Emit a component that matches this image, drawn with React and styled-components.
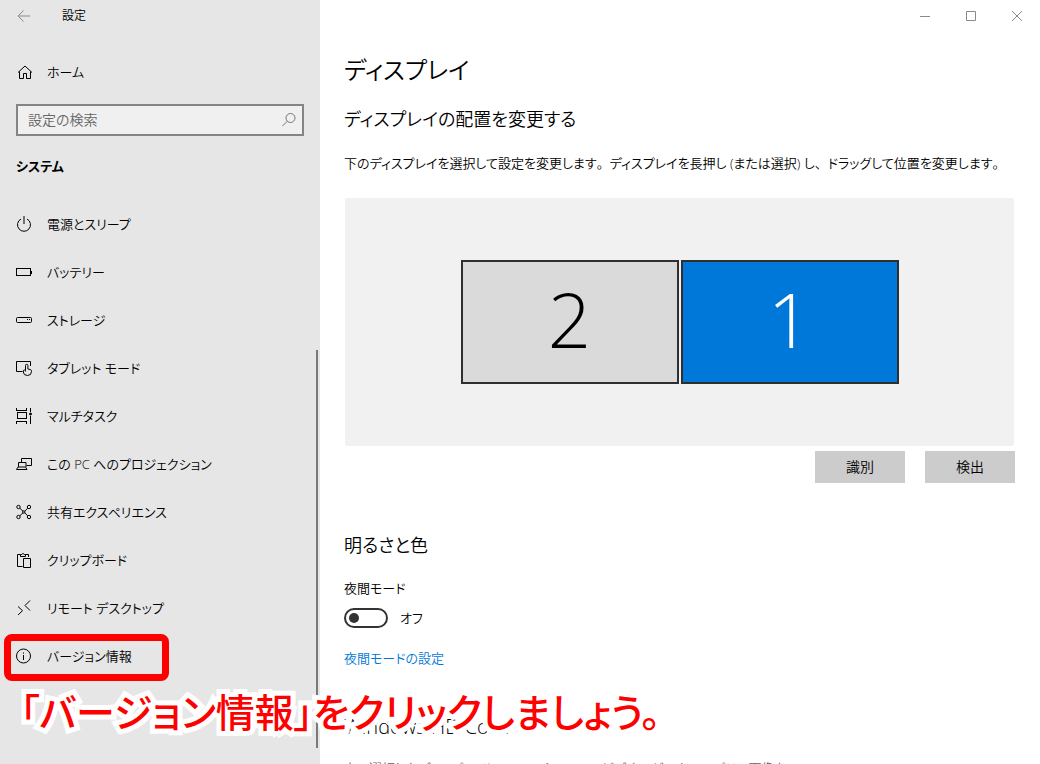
import { useState } from "react";
import styled, { createGlobalStyle } from "styled-components";

const GlobalStyle = createGlobalStyle`
  * {
    box-sizing: border-box;
  }

  body {
    margin: 0;
    background: #fff;
    color: #000;
    font-family: "Open Sans", "Noto Sans CJK JP", sans-serif;
    font-size: 13px;
    font-weight: 350;
    line-height: 20px;
    font-feature-settings: "palt";
  }

  button,
  input {
    color: inherit;
    font: inherit;
    font-feature-settings: inherit;
  }
`;

const Window = styled.div`
  position: relative;
  display: grid;
  grid-template-columns: 320px 1fr;
  height: 100vh;
  overflow: hidden;
`;

const Sidebar = styled.aside`
  display: flex;
  flex-direction: column;
  min-height: 0;
  background: #e6e6e6;
`;

const TitleBar = styled.header`
  display: flex;
  align-items: center;
  flex-shrink: 0;
  height: 32px;
  justify-content: ${(props) => (props.$end ? "flex-end" : "flex-start")};
`;

const BarButton = styled.button`
  display: flex;
  align-items: center;
  justify-content: center;
  width: ${(props) => props.$width}px;
  height: 32px;
  padding: 0;
  border: 0;
  background: transparent;
  color: #8a8a8a;
`;

const AppName = styled.span`
  margin-left: 14px;
  font-size: 12px;
`;

const Icon = styled.svg`
  width: 16px;
  height: 16px;
  flex-shrink: 0;
  fill: none;
  stroke: currentColor;
  stroke-width: 1;
  overflow: visible;
`;

const NavLink = styled.a`
  position: relative;
  display: flex;
  align-items: center;
  gap: 15px;
  height: 48px;
  padding: 0 16px;
  color: #000;
  text-decoration: none;
`;

const HomeLink = styled(NavLink)`
  margin-top: 16px;
`;

const Search = styled.label`
  display: flex;
  align-items: center;
  height: 32px;
  margin: 8px 16px 0;
  padding: 0 5px 0 10px;
  border: 2px solid #858585;
  background: #f0f0f0;
  color: #767676;
`;

const SearchInput = styled.input`
  flex: 1;
  min-width: 0;
  padding: 0;
  border: 0;
  outline: 0;
  background: transparent;
  font-size: 14px;

  &::placeholder {
    color: #666;
    opacity: 1;
  }
`;

const GroupTitle = styled.h2`
  margin: 20px 16px 24px;
  font-size: 13px;
  font-weight: 700;
  line-height: 20px;
`;

const NavArea = styled.div`
  display: flex;
  flex: 1;
  min-height: 0;
  justify-content: space-between;
`;

const NavList = styled.nav`
  flex: 1;
`;

const ScrollThumb = styled.div`
  width: 2px;
  margin: 150px 2px 16px 0;
  background: #7a7a7a;
`;

const Highlight = styled.span`
  position: absolute;
  top: 2px;
  left: 4px;
  width: 165px;
  height: 47px;
  border: 7px solid #fe0000;
  border-radius: 8px;
`;

const Main = styled.main`
  min-width: 0;
  min-height: 0;
  overflow: hidden;
`;

const Content = styled.div`
  padding: 18px 25px 0 24px;
`;

const PageTitle = styled.h1`
  margin: 0;
  font-size: 24px;
  font-weight: 350;
  line-height: 40px;
`;

const SectionTitle = styled.h2`
  margin: ${(props) => props.$top}px 0 0;
  font-size: ${(props) => props.$size || 18}px;
  font-weight: 350;
  line-height: 28px;
`;

const Text = styled.p`
  margin: ${(props) => props.$top}px 0 0;
  color: ${(props) => props.$color || "#000"};
  white-space: nowrap;
`;

// punctuation that keeps its full-width cell
const Wide = styled.span`
  font-feature-settings: normal;
`;

const Arrangement = styled.div`
  display: flex;
  align-items: center;
  justify-content: center;
  gap: 2px;
  height: 248px;
  margin: 25px 1px 0;
  border-radius: 2px;
  background: #f1f1f1;
`;

const Monitor = styled.button`
  width: 218px;
  height: 124px;
  padding: 0 0 6px;
  border: 2px solid #2f2f2f;
  background: ${(props) => (props.$active ? "#0078d9" : "#dadada")};
  color: ${(props) => (props.$active ? "#fff" : "#000")};
  font-size: 76px;
  font-weight: 300;
  line-height: 114px;
`;

const Actions = styled.div`
  display: flex;
  justify-content: flex-end;
  gap: 20px;
  margin-top: 5px;
`;

const ActionButton = styled.button`
  width: 90px;
  height: 32px;
  padding: 0;
  border: 0;
  background: #ccc;
  font-size: 14px;
`;

const ToggleRow = styled.label`
  display: flex;
  align-items: center;
  gap: 12px;
  margin-top: 10px;
`;

const Toggle = styled.input`
  display: flex;
  align-items: center;
  width: 44px;
  height: 20px;
  margin: 0;
  padding: 0 3px;
  appearance: none;
  border: 2px solid #333;
  border-radius: 10px;

  &::before {
    content: "";
    width: 10px;
    height: 10px;
    border-radius: 50%;
    background: #333;
  }

  &:checked {
    justify-content: flex-end;
    border-color: #0078d7;
    background: #0078d7;
  }

  &:checked::before {
    background: #fff;
  }
`;

const SettingsLink = styled.a`
  display: block;
  margin-top: 20px;
  color: #0078d7;
  text-decoration: none;
`;

const Caption = styled.p`
  position: absolute;
  top: 682px;
  left: 20px;
  margin: 0;
  color: #fe0000;
  font-size: 39px;
  font-weight: 500;
  line-height: 60px;
  white-space: nowrap;
  paint-order: stroke fill;
  -webkit-text-stroke: 10px #fff;
  stroke-linejoin: round;
`;

const icons = {
  home: (
    <path d="M2 8.5 9 2l7 6.5M3.5 7.5v7h4v-5h3v5h4v-7" />
  ),
  power: <path d="M8 0v8M5 3a6.5 6.5 0 1 0 6 0" />,
  battery: (
    <path d="M.5 4.5h14v7H.5zM15.5 6.5v3" shapeRendering="crispEdges" />
  ),
  storage: (
    <>
      <rect x=".5" y="5.5" width="15" height="5" rx="1" />
      <path d="M11 7.5h1M13 7.5h1" />
    </>
  ),
  tablet: (
    <>
      <path d="M6.5 11.500H.5v-10h14V6" />
      <path d="M9.500 10.500V5.500a1.200 1.200 0 0 1 2.400 0V9l2.600.6q1 .3 1 1.300v.6q0 4-4 4t-4.200-3.500V11q0-1 1.100-1 1.100 0 1.100 1.500" />
    </>
  ),
  multitask: (
    <>
      <path
        d="M.5 0v2.500h10V0M1 4.500h9.500v6H1zM.5 15.500v-2.500h10v2.500M14.500 0v4M14.500 8v7.500"
        shapeRendering="crispEdges"
      />
      <circle cx="14.500" cy="6" r="1" fill="currentColor" />
    </>
  ),
  project: (
    <path d="M5.500 6V2.500h10v7h-5M2.500 11V6.500h7.500v4.500M2 11l-1.500 2.500h10.500L9.500 11H2" />
  ),
  share: (
    <>
      <circle cx="2.500" cy="3" r="1.700" />
      <circle cx="13" cy="3" r="1.700" />
      <circle cx="2.500" cy="13" r="1.700" />
      <circle cx="13" cy="13" r="1.700" />
      <circle cx="7.800" cy="8" r="1.200" />
      <path d="M3.800 4.200 7 7.200M11.700 4.200 8.700 7.200M3.800 11.800 7 8.800M11.700 11.800 8.700 8.800" />
    </>
  ),
  clipboard: (
    <>
      <path d="M6.500 14.500h-5v-12h3M9.500 2.500h3V5" />
      <path d="M4.500 4.500v-2h1.200a1.400 1.400 0 0 1 2.600 0h1.200v2z" />
      <path d="M7.500 6.500h7v9h-7z" />
    </>
  ),
  remote: <path d="M2 6.500l4.500 4.200L2 15M14 .5 9 5.500l5 5" />,
  info: (
    <>
      <circle cx="7.500" cy="8" r="7" />
      <path d="M7.500 7v5M7.500 4.500v1.200" />
    </>
  ),
};

const navItems = [
  { icon: "power", label: "電源とスリープ" },
  { icon: "battery", label: "バッテリー" },
  { icon: "storage", label: "ストレージ" },
  { icon: "tablet", label: "タブレット モード" },
  { icon: "multitask", label: "マルチタスク" },
  { icon: "project", label: "この PC へのプロジェクション" },
  { icon: "share", label: "共有エクスペリエンス" },
  { icon: "clipboard", label: "クリップボード" },
  { icon: "remote", label: "リモート デスクトップ" },
  { icon: "info", label: "バージョン情報", highlight: true },
];

const App = () => {
  const [nightLight, setNightLight] = useState(false);
  const [selected, setSelected] = useState(1);

  return (
    <Window>
      <GlobalStyle />
      <Sidebar>
        <TitleBar>
          <BarButton $width={48} aria-label="戻る">
            <Icon viewBox="0 0 16 16">
              <path d="M14 8H2.500M7.500 2.500 2 8l5.500 5.500" />
            </Icon>
          </BarButton>
          <AppName>設定</AppName>
        </TitleBar>
        <HomeLink href="#home">
          <Icon viewBox="0 0 16 16">{icons.home}</Icon>
          ホーム
        </HomeLink>
        <Search>
          <SearchInput type="text" placeholder="設定の検索" aria-label="設定の検索" />
          <Icon viewBox="0 0 16 16">
            <circle cx="9.500" cy="6" r="4.500" />
            <path d="M6.300 9.200 1.500 14" />
          </Icon>
        </Search>
        <GroupTitle>システム</GroupTitle>
        <NavArea>
          <NavList>
            {navItems.map((item) => (
              <NavLink key={item.icon} href={`#${item.icon}`}>
                <Icon viewBox="0 0 16 16">{icons[item.icon]}</Icon>
                {item.label}
                {item.highlight && <Highlight />}
              </NavLink>
            ))}
          </NavList>
          <ScrollThumb />
        </NavArea>
      </Sidebar>

      <Main>
        <TitleBar $end>
          <BarButton $width={46} aria-label="最小化">
            <Icon viewBox="0 0 16 16">
              <path d="M3 8.500h10" />
            </Icon>
          </BarButton>
          <BarButton $width={46} aria-label="最大化">
            <Icon viewBox="0 0 16 16">
              <path d="M3.500 3.500h9v9h-9z" />
            </Icon>
          </BarButton>
          <BarButton $width={46} aria-label="閉じる">
            <Icon viewBox="0 0 16 16">
              <path d="M3 3l10 10M13 3 3 13" />
            </Icon>
          </BarButton>
        </TitleBar>
        <Content>
          <PageTitle>ディスプレイ</PageTitle>
          <SectionTitle $top={15}>ディスプレイの配置を変更する</SectionTitle>
          <Text $top={20}>
            下のディスプレイを選択して設定を変更します<Wide>。</Wide>
            ディスプレイを長押し (または選択) し<Wide>、</Wide>
            ドラッグして位置を変更します<Wide>。</Wide>
          </Text>
          <Arrangement>
            {[2, 1].map((id) => (
              <Monitor key={id} $active={selected === id} onClick={() => setSelected(id)}>
                {id}
              </Monitor>
            ))}
          </Arrangement>
          <Actions>
            <ActionButton>識別</ActionButton>
            <ActionButton>検出</ActionButton>
          </Actions>

          <SectionTitle $top={48}>明るさと色</SectionTitle>
          <Text $top={19}>夜間モード</Text>
          <ToggleRow>
            <Toggle
              type="checkbox"
              role="switch"
              aria-label="夜間モード"
              checked={nightLight}
              onChange={(e) => setNightLight(e.target.checked)}
            />
            {nightLight ? "オン" : "オフ"}
          </ToggleRow>
          <SettingsLink href="#night-light">夜間モードの設定</SettingsLink>

          <SectionTitle $top={45} $size={20}>
            Windows HD Color
          </SectionTitle>
          <Text $top={17} $color="#666">
            上で選択したディスプレイに<Wide>、</Wide>HDR や WCG のビデオ<Wide>、</Wide>
            ゲーム<Wide>、</Wide>アプリの画像を
          </Text>
        </Content>
      </Main>

      <Caption>「バージョン情報」をクリックしましょう。</Caption>
    </Window>
  );
};

export default App;
